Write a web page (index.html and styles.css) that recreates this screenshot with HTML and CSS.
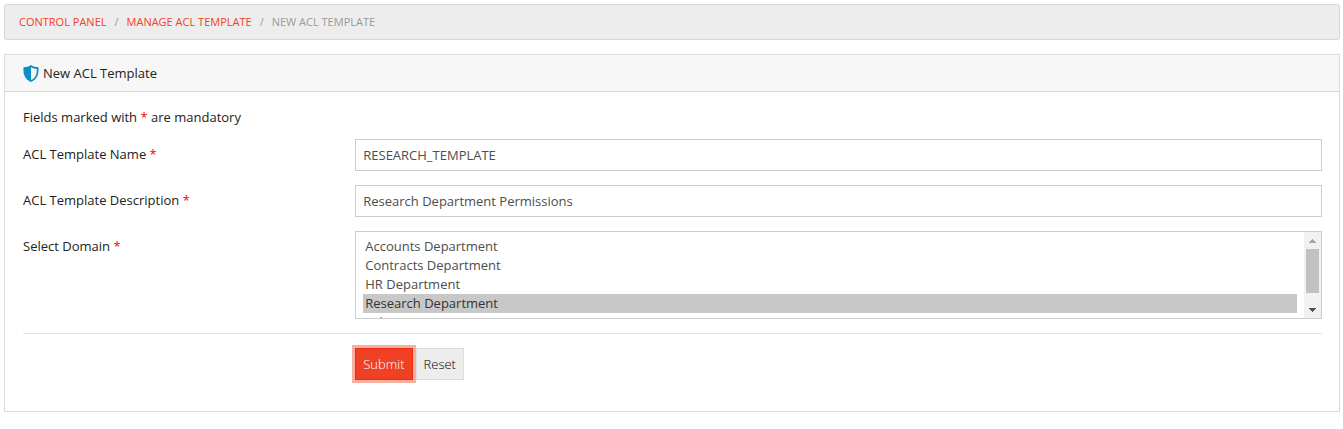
FILE: index.html
```html
<!DOCTYPE html>
<html lang="en">

<head>
    <meta charset="UTF-8">
    <meta name="viewport" content="width=device-width, initial-scale=1.0">
    <title>New ACL Template</title>
    <link rel="stylesheet" href="styles.css">
</head>

<body>
    <nav class="breadcrumb" aria-label="Breadcrumb">
        <a href="#">Control Panel</a>
        <span class="divider">/</span>
        <a href="#">Manage ACL Template</a>
        <span class="divider">/</span>
        <span>New ACL Template</span>
    </nav>

    <div class="panel">
        <div class="panel-heading">
            <svg class="shield" viewBox="0 0 16 17" aria-hidden="true">
                <path d="M8 0 C6 1.6 3.4 2.2 0.5 2.2 C0 9 1.5 14 8 17 C14.500 14 16 9 15.500 2.200 C12.600 2.200 10 1.600 8 0 Z M8 2.200 C9.800 3.300 11.800 3.800 13.800 3.900 C13.900 9 12.600 12.800 8 15.100 Z" fill="#0c8dc3" fill-rule="evenodd" />
            </svg>
            <span>New ACL Template</span>
        </div>
        <form class="panel-body" action="#" method="post" name="aclForm" id="aclForm">
            <p class="note">Fields marked with <span class="required">*</span> are mandatory</p>

            <div class="form-row">
                <label for="templateName">ACL Template Name <span class="required">*</span></label>
                <input class="form-control" type="text" name="templateName" id="templateName" value="RESEARCH_TEMPLATE" required>
            </div>
            <div class="form-row">
                <label for="templateDescription">ACL Template Description <span class="required">*</span></label>
                <input class="form-control" type="text" name="templateDescription" id="templateDescription" value="Research Department Permissions" required>
            </div>
            <div class="form-row">
                <label for="domain">Select Domain <span class="required">*</span></label>
                <div class="list-box">
                    <select class="domain-list" name="domain" id="domain" size="4" multiple required>
                        <option>Accounts Department</option>
                        <option>Contracts Department</option>
                        <option>HR Department</option>
                        <option selected>Research Department</option>
                        <option>Sales Department</option>
                        <option>Support Department</option>
                    </select>
                    <div class="scrollbar" aria-hidden="true">
                        <svg class="arrow arrow-up" viewBox="0 0 7 4"><path d="M0 4V3H1V2H2V1H3V0H4V1H5V2H6V3H7V4Z" /></svg>
                        <div class="thumb"></div>
                        <svg class="arrow arrow-down" viewBox="0 0 7 4"><path d="M0 0V1H1V2H2V3H3V4H4V3H5V2H6V1H7V0Z" /></svg>
                    </div>
                </div>
            </div>

            <div class="form-row form-actions">
                <div class="buttons">
                    <button class="btn btn-submit" type="submit">Submit</button>
                    <button class="btn btn-reset" type="reset">Reset</button>
                </div>
            </div>
        </form>
    </div>
</body>

</html>
```
FILE: styles.css
```css
* {
    box-sizing: border-box;
}

body {
    margin: 4px 3px 0 4px;
    background-color: #fff;
    color: #222;
    font-family: "Open Sans", Arial, sans-serif;
    font-size: 13px;
    line-height: 20px;
}

.breadcrumb {
    display: flex;
    gap: 8px;
    padding: 8px 14px;
    margin-bottom: 14px;
    background-color: #ededed;
    border: 1px solid #d6d6d6;
    border-radius: 3px;
    color: #999;
    font-size: 11px;
    line-height: 18px;
    text-transform: uppercase;
}

.breadcrumb a {
    color: #f04124;
    text-decoration: none;
}

.breadcrumb a:hover {
    text-decoration: underline;
}

.panel {
    border: 1px solid #dcdcdc;
}

.panel-heading {
    display: flex;
    align-items: center;
    gap: 4px;
    padding: 8px 18px;
    background-color: #f7f7f7;
    border-bottom: 1px solid #d8d8d8;
}

.shield {
    width: 16px;
    height: 17px;
}

.panel-body {
    padding: 15px 17px 31px 18px;
}

.note {
    margin: 0 0 12px;
}

.form-row {
    display: grid;
    grid-template-columns: 1fr 3fr;
    column-gap: 10px;
    margin-bottom: 14px;
}

.form-row label {
    padding-top: 5px;
}

.required {
    color: #f00;
}

.form-control {
    width: 100%;
    height: 32px;
    padding: 6px 7px;
    background-color: #fff;
    border: 1px solid #ccc;
    border-radius: 0;
    color: #4d4d4d;
    font: inherit;
    outline: none;
}

.list-box {
    display: flex;
    height: 88px;
    border: 1px solid #ccc;
}

.domain-list {
    flex: 1;
    min-width: 0;
    height: 100%;
    padding: 5px 7px;
    background-color: #fff;
    border: none;
    color: #4d4d4d;
    font: inherit;
    outline: none;
    scrollbar-width: none;
}

.domain-list option {
    min-height: 19px;
    padding: 0 2px;
    line-height: 19px;
}

.domain-list option:checked {
    background-color: #c8c8c8;
    color: #333;
}

.scrollbar {
    display: flex;
    flex-direction: column;
    align-items: center;
    width: 17px;
    padding: 7px 2px 6px;
    background-color: #f1f1f1;
}

.arrow {
    width: 7px;
    height: 4px;
}

.arrow-up {
    fill: #a3a3a3;
}

.arrow-down {
    margin-top: auto;
    fill: #505050;
}

.thumb {
    width: 13px;
    height: 44px;
    margin-top: 6px;
    background-color: #c1c1c1;
}

.form-actions {
    padding-top: 14px;
    margin-bottom: 0;
    border-top: 1px solid #e3e3e3;
}

.buttons {
    grid-column: 2;
    display: flex;
    gap: 3px;
}

.btn {
    height: 32px;
    padding: 0 7px;
    border: 1px solid #ddd;
    font: inherit;
    font-weight: 300;
    cursor: pointer;
}

.btn-submit {
    background-color: #f04124;
    border-color: #ea2f10;
    box-shadow: 0 0 0 3px #f9aea2;
    color: #fff;
}

.btn-reset {
    background-color: #ededed;
    color: #000;
}
```
